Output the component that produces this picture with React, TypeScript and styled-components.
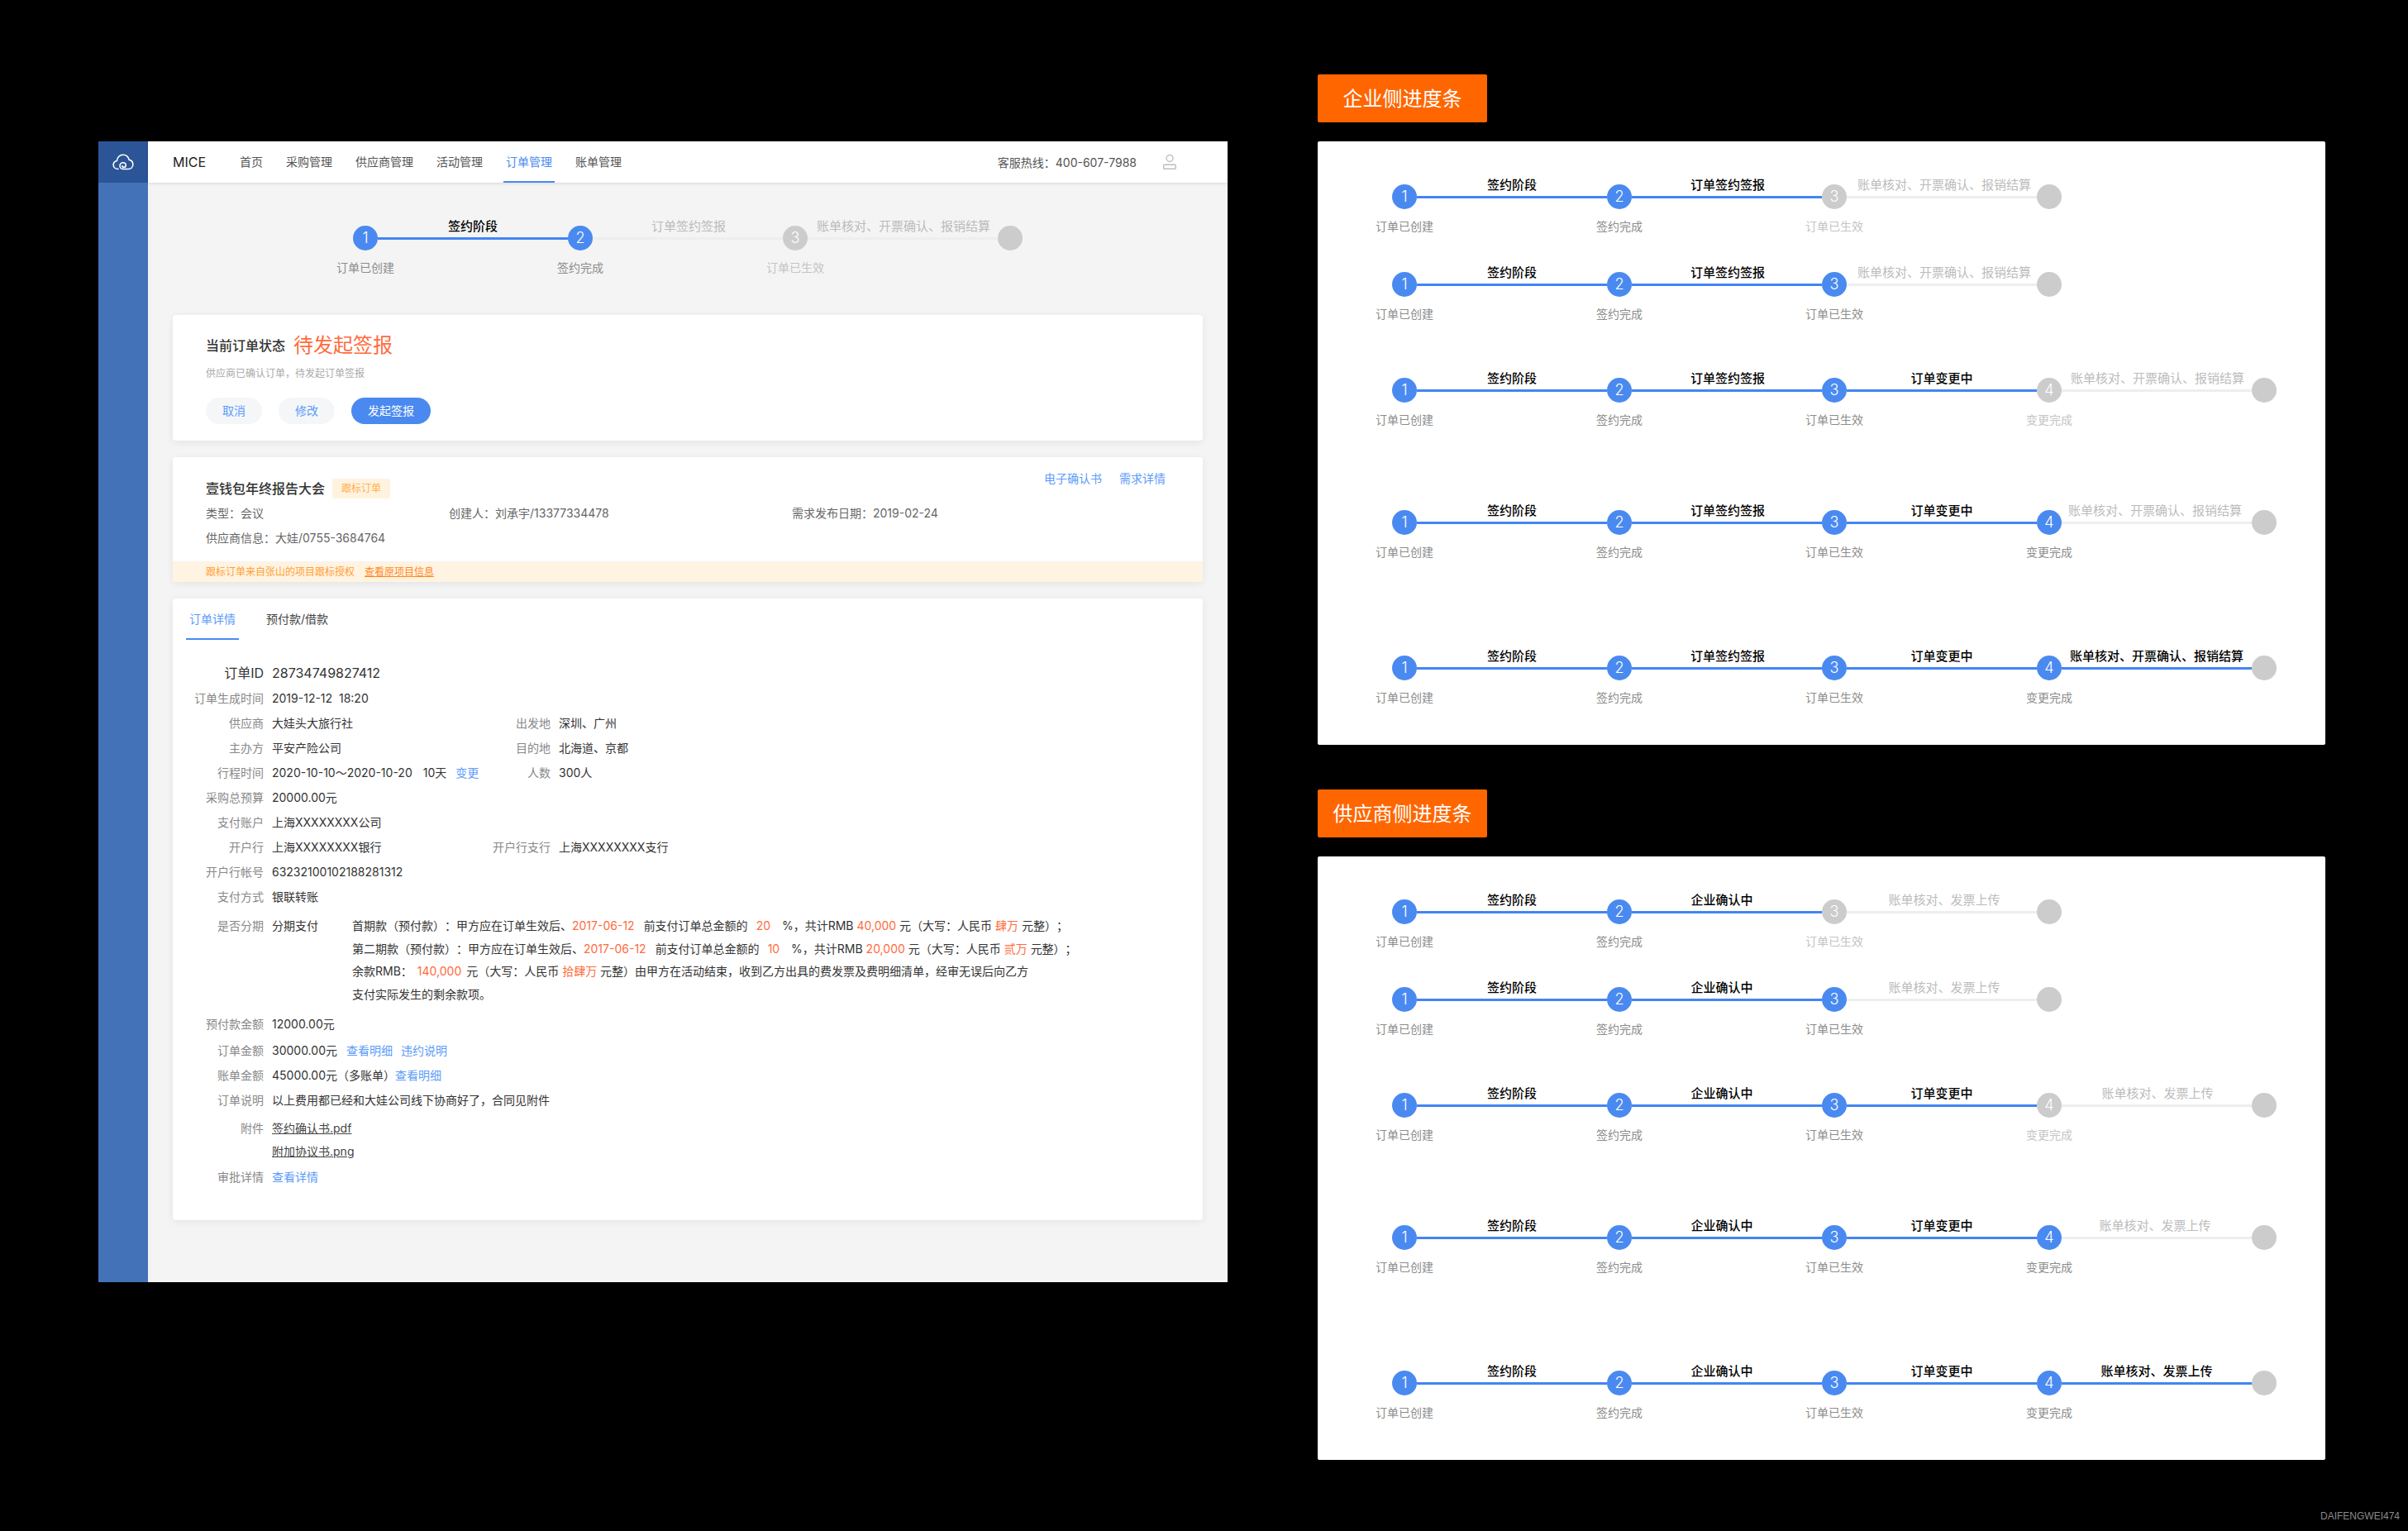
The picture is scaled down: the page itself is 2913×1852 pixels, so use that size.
import React from 'react';
import styled, { createGlobalStyle } from 'styled-components';

const GlobalStyle = createGlobalStyle`
    html, body {
        margin: 0;
        padding: 0;
        background: #000;
    }
    body {
        font-family: Inter, "Noto Sans CJK SC", "Liberation Sans", sans-serif;
        font-size: 14px;
        color: #333;
        text-spacing-trim: space-all;
    }
    * {
        box-sizing: border-box;
    }
`;

const BLUE = '#4a8af0';
const LINK = '#5b9bf8';
const RED = '#ff6b3d';

const Page = styled.div`
    position: relative;
    width: 2913px;
    height: 1852px;
    background: #000;
    display: flex;
    align-items: flex-start;
    padding: 90px 0 0 119px;
    gap: 109px;
    overflow: hidden;
`;

const Screen = styled.div`
    margin-top: 81px;
    width: 1366px;
    height: 1380px;
    display: flex;
    background: #f4f4f4;
`;

const Sidebar = styled.div`
    width: 60px;
    background: #4472b8;
`;

const LogoCell = styled.div`
    height: 50px;
    background: #2c5597;
    display: flex;
    align-items: center;
    justify-content: center;
`;

const Content = styled.div`
    flex: 1;
    min-width: 0;
`;

const Header = styled.div`
    height: 50px;
    background: #fff;
    box-shadow: 0 1px 4px rgba(0, 0, 0, 0.12);
    display: flex;
    align-items: center;
    padding: 0 62px 0 30px;
`;

const Brand = styled.div`
    font-size: 16px;
    color: #222;
    width: 78px;
`;

const Nav = styled.div`
    display: flex;
    gap: 22px;
    height: 100%;
    flex: 1;
`;

const NavItem = styled.div<{ $active?: boolean }>`
    height: 100%;
    padding: 0 3px;
    line-height: 50px;
    font-size: 14px;
    color: ${(props) => (props.$active ? BLUE : '#555')};
    border-bottom: 2px solid ${(props) => (props.$active ? BLUE : 'transparent')};
`;

const Hotline = styled.div`
    color: #555;
    font-size: 14px;
    margin-right: 32px;
`;

const Body = styled.div`
    padding: 0 30px;
`;

const StepperWrap = styled.div`
    padding: 52px 0 48px 218px;
`;

const StepRow = styled.div<{ $gap?: number }>`
    display: flex;
    align-items: flex-start;
    margin-top: ${(props) => props.$gap || 0}px;
`;

const Node = styled.div`
    width: 30px;
    flex: none;
    display: flex;
    flex-direction: column;
    align-items: center;
`;

const Circle = styled.div<{ $on?: boolean }>`
    width: 30px;
    height: 30px;
    border-radius: 50%;
    background: ${(props) => (props.$on ? BLUE : '#cccccc')};
    color: #fff;
    font-size: 18px;
    line-height: 30px;
    text-align: center;
    font-weight: 300;
`;

const NodeLabel = styled.div<{ $on?: boolean }>`
    width: 100px;
    flex: none;
    margin-top: 10px;
    height: 20px;
    line-height: 22px;
    text-align: center;
    white-space: nowrap;
    font-size: 14px;
    color: ${(props) => (props.$on ? '#8c8c8c' : '#c4c4c4')};
`;

const Segment = styled.div`
    width: 230px;
    flex: none;
    margin-top: -10px;
    display: flex;
    flex-direction: column;
    align-items: center;
`;

const SegLabel = styled.div<{ $on?: boolean; $shift?: number }>`
    height: 20px;
    line-height: 22px;
    font-size: 15px;
    white-space: nowrap;
    color: ${(props) => (props.$on ? '#000' : '#bbbbbb')};
    font-weight: ${(props) => (props.$on ? 500 : 400)};
    transform: translateX(${(props) => props.$shift || 0}px);
`;

const SegLine = styled.div<{ $on?: boolean }>`
    width: 100%;
    height: 3px;
    margin-top: 4px;
    background: ${(props) => (props.$on ? '#4285f4' : '#eeeeee')};
`;

const Card = styled.div<{ $gap?: number }>`
    background: #fff;
    border-radius: 4px;
    box-shadow: 0 2px 10px rgba(0, 0, 0, 0.07);
    margin-top: ${(props) => props.$gap || 0}px;
    overflow: hidden;
`;

const StatusCard = styled(Card)`
    height: 152px;
    padding: 18px 40px 0;
`;

const StatusTitle = styled.div`
    display: flex;
    align-items: center;
    height: 32px;
    gap: 10px;
`;

const StatusLabel = styled.span`
    font-size: 16px;
    font-weight: 500;
    color: #333;
    margin-top: 4px;
`;

const StatusValue = styled.span`
    font-size: 24px;
    color: ${RED};
`;

const StatusDesc = styled.div`
    font-size: 12px;
    line-height: 20px;
    color: #aaa;
    margin-top: 11px;
`;

const Buttons = styled.div`
    display: flex;
    gap: 20px;
    margin-top: 19px;
`;

const Pill = styled.div<{ $primary?: boolean; $w: number }>`
    width: ${(props) => props.$w}px;
    height: 32px;
    line-height: 31px;
    border-radius: 16px;
    text-align: center;
    font-size: 14px;
    background: ${(props) => (props.$primary ? BLUE : '#f5f6f8')};
    color: ${(props) => (props.$primary ? '#fff' : LINK)};
`;

const ProjectTop = styled.div`
    height: 126px;
    padding: 16px 40px 0;
    display: flex;
    flex-direction: column;
`;

const ProjectHead = styled.div`
    display: flex;
    align-items: flex-start;
    height: 37px;
`;

const ProjectTitle = styled.div`
    margin-top: 10px;
    font-size: 16px;
    font-weight: 500;
    line-height: 24px;
    color: #333;
`;

const Tag = styled.div`
    margin: 10px 0 0 9px;
    width: 70px;
    height: 24px;
    line-height: 24px;
    text-align: center;
    font-size: 12px;
    border-radius: 2px;
    background: #fff3e0;
    color: #ffb04a;
`;

const TopLinks = styled.div`
    margin-left: auto;
    display: flex;
    gap: 21px;
    margin-right: 5px;
    line-height: 20px;
    color: ${LINK};
`;

const MetaGrid = styled.div`
    display: grid;
    grid-template-columns: 294px 415px 1fr;
    grid-auto-rows: 30px;
    line-height: 30px;
    color: #666;
    font-size: 14px;
`;

const Notice = styled.div`
    height: 25px;
    line-height: 23px;
    background: #fff3e2;
    border-top: 1px dashed #f4f4f4;
    padding-left: 40px;
    font-size: 12px;
    color: #ffa033;
`;

const NoticeLink = styled.span`
    margin-left: 12px;
    color: #ff8a1e;
    text-decoration: underline;
`;

const DetailCard = styled(Card)`
    padding: 0 20px 37px 16px;
`;

const Tabs = styled.div`
    height: 50px;
    display: flex;
    gap: 29px;
`;

const Tab = styled.div<{ $active?: boolean }>`
    height: 50px;
    padding: 0 4px;
    line-height: 49px;
    color: ${(props) => (props.$active ? LINK : '#444')};
    border-bottom: 2px solid ${(props) => (props.$active ? BLUE : 'transparent')};
`;

const Details = styled.div`
    padding: 25px 0 0 4px;
`;

const Row = styled.div<{ $top?: number; $main?: boolean }>`
    display: grid;
    grid-template-columns: 90px 237px 90px 1fr;
    column-gap: 10px;
    margin-top: ${(props) => props.$top || 0}px;
    line-height: 30px;
    height: 30px;
    font-size: ${(props) => (props.$main ? 16 : 14)}px;
    color: #333;
`;

const Label = styled.div<{ $main?: boolean }>`
    text-align: right;
    white-space: nowrap;
    color: ${(props) => (props.$main ? '#333' : '#888')};
`;

const Value = styled.div`
    white-space: nowrap;
`;

const WideValue = styled(Value)`
    grid-column: 2 / 5;
`;

const A = styled.span<{ $gap?: number }>`
    color: ${LINK};
    margin-left: ${(props) => props.$gap || 0}px;
`;

const PlanRow = styled.div`
    display: grid;
    grid-template-columns: 90px 87px 1fr;
    column-gap: 10px;
    margin-top: 6px;
    line-height: 27.6px;
    font-size: 14px;
`;

const PlanLine = styled.div`
    white-space: nowrap;
    color: #333;
`;

const Red = styled.span<{ $m?: number }>`
    color: ${RED};
    margin: 0 ${(props) => props.$m || 0}px;
`;

const Lead = styled.span<{ $m?: number }>`
    margin-left: ${(props) => props.$m || 11}px;
`;

const FileRow = styled.div`
    display: grid;
    grid-template-columns: 90px 1fr;
    column-gap: 10px;
    margin-top: 5px;
    line-height: 28px;
`;

const FileLink = styled.div`
    text-decoration: underline;
    color: #444;
`;

const Board = styled.div`
    width: 1219px;
`;

const SectionTag = styled.div<{ $gap?: number }>`
    width: 205px;
    height: 58px;
    line-height: 60px;
    margin-top: ${(props) => props.$gap || 0}px;
    text-align: center;
    background: #ff6600;
    border-radius: 2px;
    color: #fff;
    font-size: 24px;
`;

const Panel = styled.div`
    margin-top: 23px;
    height: 730px;
    background: #fff;
    border-radius: 2px;
    padding: 52px 0 0 90px;
`;

const Watermark = styled.div`
    position: absolute;
    right: 10px;
    top: 1825px;
    line-height: 18px;
    font-size: 12px;
    font-family: "Liberation Sans", sans-serif;
    color: #8a8a8a;
`;

const CloudLogo = () => (
    <svg width="26" height="20" viewBox="0 0 26 20" fill="none" stroke="#fff" strokeWidth="1.6" strokeLinecap="round">
        <path d="M7 18.5C3.5 18.5 1.2 16.2 1.2 13.4C1.2 10.9 3 9 5.4 8.5C5.8 4.3 8.8 1.2 12.8 1.2C16.6 1.2 19.4 3.9 20.2 7.4C23 7.9 24.8 10.2 24.8 13C24.8 16.2 22.4 18.5 19.4 18.5H13.2C10.9 18.5 9 16.8 9 14.5C9 12.4 10.7 10.8 12.8 10.8C14.8 10.8 16.2 12.2 16.2 14C16.2 15.4 15.1 16.4 13.8 16.4C12.7 16.4 11.9 15.6 11.9 14.6" />
    </svg>
);

const UserIcon = () => (
    <svg width="16" height="18" viewBox="0 0 16 18" fill="none">
        <circle cx="8" cy="4.5" r="4" stroke="#bdbdbd" strokeWidth="1.4" />
        <rect x="0.7" y="12.2" width="14.6" height="5" rx="1" stroke="#bdbdbd" strokeWidth="1.4" />
    </svg>
);

type Seg = { label: string; shift?: number };

const NODE_LABELS = ['订单已创建', '签约完成', '订单已生效', '变更完成'];

// filled = how many numbered circles are blue, lit = how many segments are blue
const Stepper = ({
    segs,
    filled,
    lit,
    gap,
}: {
    segs: Seg[];
    filled: number;
    lit: number;
    gap?: number;
}) => (
    <StepRow $gap={gap}>
        {segs.map((seg, i) => (
            <React.Fragment key={seg.label}>
                <Node>
                    <Circle $on={i < filled}>{i + 1}</Circle>
                    <NodeLabel $on={i < filled}>{NODE_LABELS[i]}</NodeLabel>
                </Node>
                <Segment>
                    <SegLabel $on={i < lit} $shift={seg.shift}>
                        {seg.label}
                    </SegLabel>
                    <SegLine $on={i < lit} />
                </Segment>
            </React.Fragment>
        ))}
        <Node>
            <Circle />
        </Node>
    </StepRow>
);

const STAGE = { label: '签约阶段' };
const SIGN = { label: '订单签约签报', shift: 1 };
const CONFIRM = { label: '企业确认中', shift: -6 };
const CHANGE = { label: '订单变更中' };
const BILL = { label: '账单核对、开票确认、报销结算' };
const UPLOAD = { label: '账单核对、发票上传' };

const ProgressRows = ({ second, last }: { second: Seg; last: Seg }) => (
    <>
        <Stepper segs={[STAGE, second, { ...last, shift: 3 }]} filled={2} lit={2} />
        <Stepper segs={[STAGE, second, { ...last, shift: 3 }]} filled={3} lit={2} gap={46} />
        <Stepper segs={[STAGE, second, CHANGE, { ...last, shift: 1 }]} filled={3} lit={3} gap={68} />
        <Stepper segs={[STAGE, second, CHANGE, { ...last, shift: -2 }]} filled={4} lit={3} gap={100} />
        <Stepper segs={[STAGE, second, CHANGE, last]} filled={4} lit={4} gap={116} />
    </>
);

export default function App() {
    return (
        <Page>
            <GlobalStyle />
            <Screen>
                <Sidebar>
                    <LogoCell>
                        <CloudLogo />
                    </LogoCell>
                </Sidebar>
                <Content>
                    <Header>
                        <Brand>MICE</Brand>
                        <Nav>
                            <NavItem>首页</NavItem>
                            <NavItem>采购管理</NavItem>
                            <NavItem>供应商管理</NavItem>
                            <NavItem>活动管理</NavItem>
                            <NavItem $active>订单管理</NavItem>
                            <NavItem>账单管理</NavItem>
                        </Nav>
                        <Hotline>客服热线：400-607-7988</Hotline>
                        <UserIcon />
                    </Header>
                    <Body>
                        <StepperWrap>
                            <Stepper segs={[STAGE, SIGN, { ...BILL, shift: 1 }]} filled={2} lit={1} />
                        </StepperWrap>
                        <StatusCard>
                            <StatusTitle>
                                <StatusLabel>当前订单状态</StatusLabel>
                                <StatusValue>待发起签报</StatusValue>
                            </StatusTitle>
                            <StatusDesc>供应商已确认订单，待发起订单签报</StatusDesc>
                            <Buttons>
                                <Pill $w={68}>取消</Pill>
                                <Pill $w={68}>修改</Pill>
                                <Pill $w={96} $primary>
                                    发起签报
                                </Pill>
                            </Buttons>
                        </StatusCard>
                        <Card $gap={20}>
                            <ProjectTop>
                                <ProjectHead>
                                    <ProjectTitle>壹钱包年终报告大会</ProjectTitle>
                                    <Tag>跟标订单</Tag>
                                    <TopLinks>
                                        <span>电子确认书</span>
                                        <span>需求详情</span>
                                    </TopLinks>
                                </ProjectHead>
                                <MetaGrid>
                                    <div>类型：会议</div>
                                    <div>创建人：刘承宇/13377334478</div>
                                    <div>需求发布日期：2019-02-24</div>
                                    <div>供应商信息：大娃/0755-3684764</div>
                                </MetaGrid>
                            </ProjectTop>
                            <Notice>
                                跟标订单来自张山的项目跟标授权
                                <NoticeLink>查看原项目信息</NoticeLink>
                            </Notice>
                        </Card>
                        <DetailCard $gap={20}>
                            <Tabs>
                                <Tab $active>订单详情</Tab>
                                <Tab>预付款/借款</Tab>
                            </Tabs>
                            <Details>
                                <Row $main>
                                    <Label $main>订单ID</Label>
                                    <WideValue>28734749827412</WideValue>
                                </Row>
                                <Row $top={1}>
                                    <Label>订单生成时间</Label>
                                    <WideValue>2019-12-12&nbsp;&nbsp;18:20</WideValue>
                                </Row>
                                <Row>
                                    <Label>供应商</Label>
                                    <Value>大娃头大旅行社</Value>
                                    <Label>出发地</Label>
                                    <Value>深圳、广州</Value>
                                </Row>
                                <Row>
                                    <Label>主办方</Label>
                                    <Value>平安产险公司</Value>
                                    <Label>目的地</Label>
                                    <Value>北海道、京都</Value>
                                </Row>
                                <Row>
                                    <Label>行程时间</Label>
                                    <Value>
                                        2020-10-10～2020-10-20<Lead $m={13}>10天</Lead>
                                        <A $gap={11}>变更</A>
                                    </Value>
                                    <Label>人数</Label>
                                    <Value>300人</Value>
                                </Row>
                                <Row>
                                    <Label>采购总预算</Label>
                                    <WideValue>20000.00元</WideValue>
                                </Row>
                                <Row>
                                    <Label>支付账户</Label>
                                    <WideValue>上海XXXXXXXX公司</WideValue>
                                </Row>
                                <Row>
                                    <Label>开户行</Label>
                                    <Value>上海XXXXXXXX银行</Value>
                                    <Label>开户行支行</Label>
                                    <Value>上海XXXXXXXX支行</Value>
                                </Row>
                                <Row>
                                    <Label>开户行帐号</Label>
                                    <WideValue>63232100102188281312</WideValue>
                                </Row>
                                <Row>
                                    <Label>支付方式</Label>
                                    <WideValue>银联转账</WideValue>
                                </Row>
                                <PlanRow>
                                    <Label>是否分期</Label>
                                    <Value>分期支付</Value>
                                    <div>
                                        <PlanLine>
                                            首期款（预付款）：甲方应在订单生效后、<Red>2017-06-12</Red>
                                            <Lead>前支付订单总金额的</Lead>
                                            <Red $m={10}>20</Red> %，共计RMB <Red>40,000</Red> 元（大写：人民币 <Red>肆万</Red> 元整）；
                                        </PlanLine>
                                        <PlanLine>
                                            第二期款（预付款）：甲方应在订单生效后、<Red>2017-06-12</Red>
                                            <Lead>前支付订单总金额的</Lead>
                                            <Red $m={10}>10</Red> %，共计RMB <Red>20,000</Red> 元（大写：人民币 <Red>贰万</Red> 元整）；
                                        </PlanLine>
                                        <PlanLine>
                                            余款RMB：<Red $m={6}>140,000</Red>元（大写：人民币 <Red>拾肆万</Red> 元整）由甲方在活动结束，收到乙方出具的费发票及费明细清单，经审无误后向乙方
                                        </PlanLine>
                                        <PlanLine>支付实际发生的剩余款项。</PlanLine>
                                    </div>
                                </PlanRow>
                                <Row $top={8}>
                                    <Label>预付款金额</Label>
                                    <WideValue>12000.00元</WideValue>
                                </Row>
                                <Row $top={2}>
                                    <Label>订单金额</Label>
                                    <WideValue>
                                        30000.00元<A $gap={11}>查看明细</A>
                                        <A $gap={10}>违约说明</A>
                                    </WideValue>
                                </Row>
                                <Row>
                                    <Label>账单金额</Label>
                                    <WideValue>
                                        45000.00元（多账单）<A>查看明细</A>
                                    </WideValue>
                                </Row>
                                <Row>
                                    <Label>订单说明</Label>
                                    <WideValue>以上费用都已经和大娃公司线下协商好了，合同见附件</WideValue>
                                </Row>
                                <FileRow>
                                    <Label>附件</Label>
                                    <div>
                                        <FileLink>签约确认书.pdf</FileLink>
                                        <FileLink>附加协议书.png</FileLink>
                                    </div>
                                </FileRow>
                                <Row $top={2}>
                                    <Label>审批详情</Label>
                                    <WideValue>
                                        <A>查看详情</A>
                                    </WideValue>
                                </Row>
                            </Details>
                        </DetailCard>
                    </Body>
                </Content>
            </Screen>
            <Board>
                <SectionTag>企业侧进度条</SectionTag>
                <Panel>
                    <ProgressRows second={SIGN} last={BILL} />
                </Panel>
                <SectionTag $gap={54}>供应商侧进度条</SectionTag>
                <Panel>
                    <ProgressRows second={CONFIRM} last={UPLOAD} />
                </Panel>
            </Board>
            <Watermark>DAIFENGWEI474</Watermark>
        </Page>
    );
}
